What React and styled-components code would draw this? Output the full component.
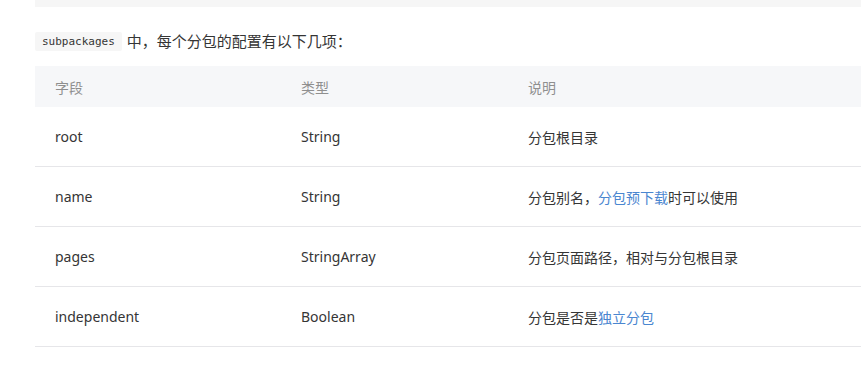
import React from "react";
import styled, { createGlobalStyle } from "styled-components";

const Global = createGlobalStyle`
  html, body { margin: 0; padding: 0; background: #fff; }
  body { font-family: "Noto Sans", "Noto Sans CJK SC", sans-serif; color: #353535; overflow: hidden; }
`;

const Page = styled.div`
  padding: 0 0 0 35px;
  overflow: hidden;
`;

const TopBlock = styled.div`
  height: 7px;
  background: #f6f6f6;
`;

const Para = styled.p`
  margin: 23px 0 0;
  font-size: 15px;
  line-height: 22px;
  height: 22px;
  display: flex;
  align-items: center;
  color: #353535;
`;

const Code = styled.code`
  font-family: "DejaVu Sans Mono", monospace;
  font-size: 11px;
  background: #f6f6f6;
  color: #353535;
  padding: 0 7px;
  height: 19px;
  line-height: 19px;
  margin-right: 5px;
  border-radius: 2px;
`;

const Table = styled.table`
  margin-top: 14px;
  border-collapse: collapse;
  width: 100%;
  font-size: 14px;
`;

const Th = styled.th`
  background: #f6f7f9;
  color: #8f8f8f;
  font-weight: normal;
  text-align: left;
  height: 41px;
  padding: 0 20px;
  width: ${(p) => p.$w || "auto"};
`;

const Td = styled.td`
  height: 59px;
  padding: 0 20px;
  border-bottom: 1px solid #e6e6e9;
  color: #353535;
`;

const Link = styled.a`
  color: #4a86d0;
  text-decoration: none;
`;

const rows = [
  ["root", "String", <>分包根目录</>],
  ["name", "String", <>分包别名，<Link href="#">分包预下载</Link>时可以使用</>],
  ["pages", "StringArray", <>分包页面路径，相对与分包根目录</>],
  ["independent", "Boolean", <>分包是否是<Link href="#">独立分包</Link></>],
];

export default function App() {
  return (
    <>
      <Global />
      <Page>
        <TopBlock />
        <Para>
          <Code>subpackages</Code>中，每个分包的配置有以下几项：
        </Para>
        <Table>
          <thead>
            <tr>
              <Th $w="206px">字段</Th>
              <Th $w="187px">类型</Th>
              <Th>说明</Th>
            </tr>
          </thead>
          <tbody>
            {rows.map((r) => (
              <tr key={r[0]}>
                <Td>{r[0]}</Td>
                <Td>{r[1]}</Td>
                <Td>{r[2]}</Td>
              </tr>
            ))}
          </tbody>
        </Table>
      </Page>
    </>
  );
}
